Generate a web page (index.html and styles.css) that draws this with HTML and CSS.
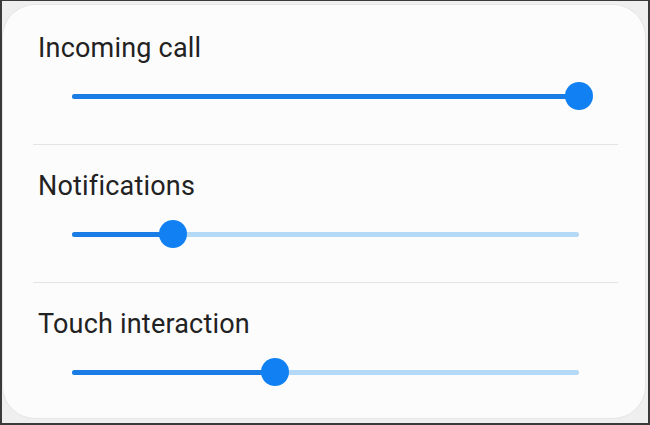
FILE: index.html
```html
<!DOCTYPE html>
<html>
<head>
<meta charset="utf-8">
<link rel="stylesheet" href="styles.css">
</head>
<body>
<div class="frame">
  <div class="card">
    <div class="section first">
      <div class="label">Incoming call</div>
      <div class="slider">
        <div class="track">
          <div class="fill" style="width:100%"></div>
          <div class="thumb" style="left:100%"></div>
        </div>
      </div>
    </div>
    <div class="sep"></div>
    <div class="section">
      <div class="label">Notifications</div>
      <div class="slider">
        <div class="track">
          <div class="fill" style="width:20%"></div>
          <div class="thumb" style="left:20%"></div>
        </div>
      </div>
    </div>
    <div class="sep"></div>
    <div class="section last">
      <div class="label">Touch interaction</div>
      <div class="slider">
        <div class="track">
          <div class="fill" style="width:40%"></div>
          <div class="thumb" style="left:40%"></div>
        </div>
      </div>
    </div>
  </div>
</div>
</body>
</html>
```
FILE: styles.css
```css
html, body {
  margin: 0;
  padding: 0;
  background: #3a3a3a;
}
.frame {
  box-sizing: border-box;
  width: 650px;
  height: 425px;
  border-top: 1px solid #3a3a3a;
  border-left: 2px solid #3a3a3a;
  border-right: 2px solid #3a3a3a;
  border-bottom: 2px solid #3a3a3a;
  background: #efefef;
  padding: 4px 3px 5px 1px;
}
.card {
  box-sizing: border-box;
  height: 413px;
  background: #fcfcfc;
  border-radius: 32px;
  box-shadow: 0 0 0 1px #e6e6e6;
  padding: 0 27px 0 30px;
  font-family: Roboto, "Noto Sans", sans-serif;
}
.section {
  padding: 25px 0 34px 0;
}
.section.first {
  padding-top: 27px;
}
.section.last {
  padding-bottom: 0;
}
.label {
  font-size: 27px;
  line-height: 32px;
  letter-spacing: 0.2px;
  color: #222222;
  padding-left: 5px;
}
.slider {
  margin-top: 18px;
  height: 28px;
  padding: 0 39px;
  display: flex;
  align-items: center;
}
.track {
  position: relative;
  flex: 1;
  height: 5px;
  border-radius: 3px;
  background: #b4d9f6;
}
.fill {
  height: 100%;
  border-radius: 3px;
  background: #1a7de6;
}
.thumb {
  position: absolute;
  top: 50%;
  width: 28px;
  height: 28px;
  margin: -14px 0 0 -14px;
  border-radius: 50%;
  background: #1180f2;
}
.sep {
  height: 1px;
  background: #e4e4e4;
}
```
